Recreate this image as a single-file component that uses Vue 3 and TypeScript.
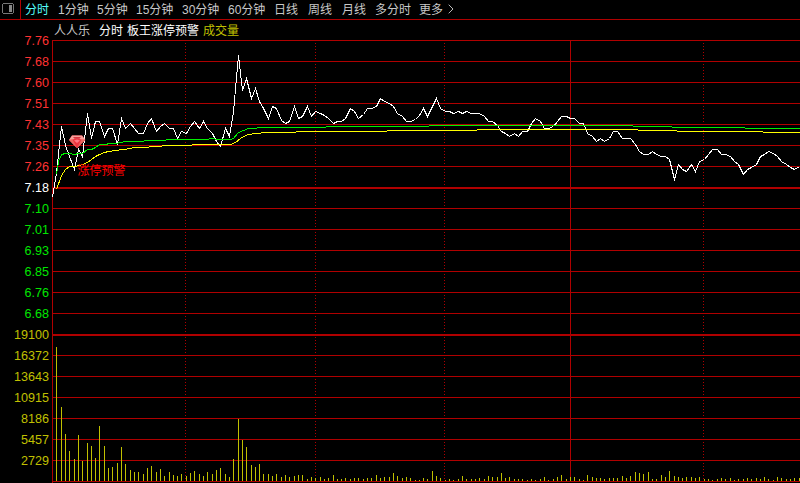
<script setup lang="ts">
interface AxisLabel { text: string; tone: 'up' | 'mid' | 'down' | 'vol' }

const periods: string[] = ['分时', '1分钟', '5分钟', '15分钟', '30分钟', '60分钟', '日线', '周线', '月线', '多分时', '更多']

const tag = (tone: AxisLabel['tone'], list: string[]): AxisLabel[] => list.map((text) => ({ text, tone }))
const axis: AxisLabel[] = [
  ...tag('up', ['7.76', '7.68', '7.60', '7.51', '7.43', '7.35', '7.26']),
  ...tag('mid', ['7.18']),
  ...tag('down', ['7.10', '7.01', '6.93', '6.85', '6.76', '6.68']),
  ...tag('vol', ['19100', '16372', '13643', '10915', '8186', '5457', '2729']),
]

const gridRows: { y: number; h: number }[] = Array.from({ length: 22 }, (_, i) => ({
  y: 40 + i * 21,
  h: i === 7 || i === 14 ? 2 : 1,
}))
const dottedColumns: number[] = [185, 315, 444, 703]

const slotX = (i: number): number => Math.floor(52.5 + i * 4.316)

const price: number[] = [
  197, 172, 126, 145, 156, 169, 149, 156, 113, 138, 121, 121, 136, 128, 128, 144, 118, 128, 123, 128, 133,
  133, 123, 118, 131, 126, 123, 128, 128, 138, 131, 133, 126, 121, 128, 121, 128, 133, 141, 146, 128,
  136, 111, 55, 90, 78, 98, 88, 101, 108, 118, 106, 108, 120, 123, 121, 106, 118, 116, 106, 116,
  111, 113, 115, 118, 123, 121, 121, 118, 108, 111, 118, 114, 108, 108, 106, 98, 101, 103, 106, 113,
  116, 121, 121, 119, 115, 108, 116, 106, 98, 108, 111, 111, 113, 111, 113, 111, 113, 113, 113, 116,
  121, 121, 125, 131, 133, 136, 133, 136, 131, 131, 123, 118, 121, 128, 128, 126, 121, 116, 116, 118,
  118, 123, 123, 133, 136, 141, 138, 141, 138, 131, 131, 138, 138, 138, 144, 151, 154, 154, 151, 154,
  156, 156, 159, 179, 164, 169, 171, 164, 171, 161, 159, 154, 149, 149, 154, 154, 156, 161, 164, 174,
  169, 167, 164, 156, 154, 151, 153, 156, 161, 164, 167, 169, 166,
]
const pricePoints: string = price.map((y, i) => `${slotX(i) + 0.5},${y + 0.5}`).join(' ')

const volumeTops: number[] = [
  347, 407, 434, 451, 459, 435, 461, 443, 446, 458, 426, 446, 468, 467, 463, 447, 464, 470, 472, 472,
  474, 468, 466, 472, 469, 476, 472, 475, 476, 474, 476, 473, 471, 474, 476, 472, 474, 470, 468, 474,
  477, 459, 419, 440, 447, 465, 467, 464, 474, 474, 476, 474, 477, 475, 477, 476, 475, 475, 479, 477,
  478, 477, 479, 478, 475, 479, 479, 478, 479, 478, 478, 479, 478, 478, 475, 478, 477, 477, 473, 476,
  478, 477, 478, 480, 480, 478, 479, 471, 476, 478, 480, 479, 480, 479, 476, 479, 479, 479, 478, 479,
  476, 477, 477, 473, 478, 477, 479, 479, 479, 480, 479, 480, 479, 477, 480, 479, 477, 475, 479, 477,
  477, 479, 480, 475, 477, 478, 478, 479, 478, 478, 478, 476, 478, 476, 472, 473, 474, 472, 479, 479,
  475, 477, 471, 476, 477, 478, 477, 477, 478, 477, 479, 479, 480, 479, 478, 479, 478, 480, 479, 479,
  478, 479, 478, 479, 477, 479, 480, 477, 478, 479, 479, 478, 478,
]
const bars = volumeTops.map((top, i) => ({ x: slotX(i + 1), y: top, h: 481 - top }))

const greenLine = '56.5,174.5 58.5,161.5 61.5,154.5 65.5,153.5 69.5,153.5 74.5,154.5 78.5,153.5 82.5,153.5 87.5,149.5 91.5,149.5 95.5,147.5 99.5,144.5 106.5,144.5 108.5,143.5 117.5,143.5 118.5,142.5 122.5,142.5 123.5,141.5 143.5,141.5 144.5,140.5 165.5,140.5 166.5,139.5 208.5,139.5 209.5,138.5 214.5,138.5 215.5,139.5 230.5,139.5 233.5,138.5 238.5,132.5 243.5,130.5 248.5,128.5 256.5,128.5 257.5,127.5 325.5,127.5 326.5,126.5 428.5,126.5 429.5,125.5 632.5,125.5 633.5,126.5 671.5,126.5 672.5,127.5 744.5,127.5 745.5,128.5 800,128.5'
const yellowLine = '56.5,189.5 61.5,175.5 65.5,169.5 69.5,166.5 75.5,166.5 82.5,164.5 87.5,162.5 91.5,159.5 95.5,156.5 99.5,154.5 104.5,152.5 108.5,151.5 116.5,150.5 122.5,149.5 131.5,148.5 132.5,147.5 148.5,147.5 149.5,146.5 161.5,146.5 162.5,145.5 191.5,145.5 192.5,144.5 230.5,144.5 235.5,142.5 240.5,138.5 245.5,135.5 248.5,134.5 255.5,133.5 266.5,132.5 295.5,132.5 296.5,131.5 386.5,131.5 387.5,130.5 476.5,130.5 477.5,129.5 637.5,129.5 638.5,130.5 676.5,130.5 677.5,131.5 762.5,131.5 763.5,132.5 800,132.5'
</script>

<template>
  <main class="terminal">
    <header class="toolbar">
      <div class="panel-toggle">
        <svg width="12" height="11" viewBox="0 0 12 11" shape-rendering="crispEdges">
          <rect x="1" y="0" width="10" height="1" fill="#777" />
          <rect x="1" y="10" width="10" height="1" fill="#777" />
          <rect x="0" y="1" width="1" height="9" fill="#777" />
          <rect x="11" y="1" width="1" height="9" fill="#777" />
          <rect x="7" y="2" width="3" height="7" fill="#888" />
        </svg>
      </div>
      <nav class="periods">
        <span v-for="(p, i) in periods" :key="p" :class="{ active: i === 0 }">{{ p }}</span>
        <svg class="more" width="6" height="10" viewBox="0 0 6 10">
          <path d="M.7.7 5 5 .7 9.3" fill="none" stroke="#b8b8b8" />
        </svg>
      </nav>
    </header>
    <section class="body">
      <div class="axis">
        <span v-for="a in axis" :key="a.text" :class="a.tone">{{ a.text }}</span>
      </div>
      <div class="chart">
        <div class="legend">
          <span class="stock">人人乐</span>
          <span class="mode">分时</span>
          <span class="alert">板王涨停预警</span>
          <span class="volume">成交量</span>
        </div>
        <svg class="plot" width="748" height="443" viewBox="52 40 748 443" shape-rendering="crispEdges">
          <g fill="#b00000">
            <rect v-for="r in gridRows" :key="r.y" x="52" :y="r.y" width="748" :height="r.h" />
            <rect x="52" y="40" width="1" height="443" />
            <rect x="570" y="40" width="1" height="441" />
          </g>
          <line
            v-for="x in dottedColumns" :key="x" class="dotted"
            :x1="x + 0.5" y1="43" :x2="x + 0.5" y2="481"
          />
          <rect v-for="b in bars" :key="b.x" :x="b.x" :y="b.y" width="1" :height="b.h" fill="#c0c000" />
          <polyline class="curve" :points="pricePoints" stroke="#fff" />
          <polyline class="curve" :points="greenLine" stroke="#00f000" />
          <polyline class="curve" :points="yellowLine" stroke="#ff0" />
          <g shape-rendering="geometricPrecision">
            <path d="M72 135.5H82L85.3 140 77 148.2 69 140Z" fill="#ef3540" />
            <path d="M72 135.5H82L85.3 140 81.5 139.5 77 138.2 72.5 139.5 69 140Z" fill="#f7a09a" />
            <path d="M73 137H81L79.5 138.7H74.5Z" fill="#d93540" />
            <path d="M69 140 72.5 139.5 77 148.2ZM85.3 140 81.5 139.5 77 148.2Z" fill="#e8665f" />
            <path d="M74 140.5 77 139.5 80 140.5 77 143Z" fill="#ff7780" />
          </g>
          <text class="mark" x="77.5" y="175">涨停预警</text>
        </svg>
      </div>
    </section>
  </main>
</template>

<style>
body { background: #000; }
</style>

<style scoped>
.terminal {
  width: 800px;
  height: 483px;
  overflow: hidden;
  background: #000;
  color: #c8c8c8;
  font: 12px/18px "Liberation Sans", "Noto Sans CJK SC", sans-serif;
  white-space: nowrap;
}
.toolbar {
  box-sizing: border-box;
  display: flex;
  height: 20px;
  border-bottom: 1px solid #b00000;
}
.panel-toggle {
  box-sizing: border-box;
  width: 21px;
  padding: 3px 0 0 2px;
  border-right: 1px solid #b00000;
}
.panel-toggle svg, .plot { display: block; }
.periods {
  display: grid;
  grid-template-columns: 33px 39px 39px 46px 46px 46px 34px 34px 33px 44px 29px 6px;
  padding: 1px 0 0 4px;
}
.periods .active { color: #54fcfc; }
.more { margin-top: 3px; }
.body {
  display: grid;
  grid-template-columns: 52px 748px;
  height: 463px;
}
.axis {
  display: flex;
  flex-direction: column;
  padding: 10px 3px 0 0;
  font-size: 12.6px;
  line-height: 22px;
  text-align: right;
}
.axis span { height: 21px; }
.up { color: #ff3232; }
.mid { color: #fff; }
.down { color: #00e600; }
.vol { color: #c0c000; }
.legend {
  display: flex;
  height: 20px;
  padding-left: 2px;
  line-height: 22px;
}
.stock { margin-right: 9px; }
.mode { margin-right: 4px; color: #fff; }
.alert { margin-right: 4px; color: #fff; }
.volume { color: #c0c000; }
.dotted { stroke: #b00000; stroke-dasharray: 1 2; }
.curve { fill: none; stroke-width: 1; }
.mark { fill: #f00; font-size: 12px; }
</style>
